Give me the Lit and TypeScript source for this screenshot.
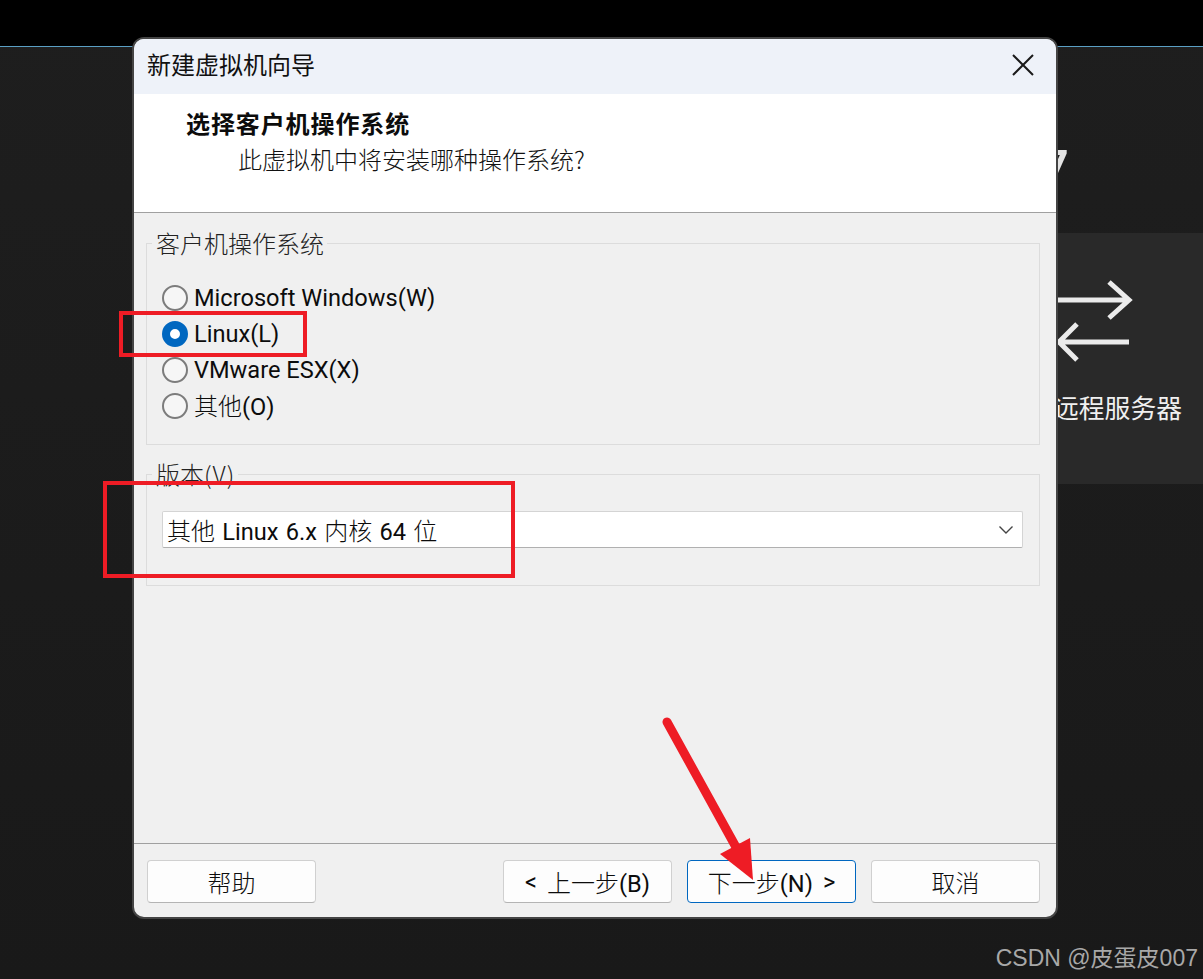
import { LitElement, html, css } from 'lit';
import { customElement } from 'lit/decorators.js';

const options = [
  { label: html`Microsoft Windows(W)`, checked: false },
  { label: html`Linux(L)`, checked: true },
  { label: html`VMware ESX(X)`, checked: false },
  { label: html`<span class="cj">其他</span>(O)`, checked: false },
];

@customElement('app-root')
export class AppRoot extends LitElement {
  static styles = css`
    :host {
      display: block;
      position: relative;
      width: 1203px;
      height: 979px;
      overflow: hidden;
      background: linear-gradient(#1e1e1e, #191919);
      font-family: Roboto, "Noto Sans CJK SC", sans-serif;
      font-size: 23.6px;
      color: #0c0c0c;
    }
    .cj {
      font-family: "Noto Sans CJK SC", sans-serif;
      font-size: 24px;
      font-weight: 300;
    }

    /* desktop behind the dialog */
    .topbar {
      height: 46px;
      background: #000;
      border-bottom: 1px solid #5a9fc4;
    }
    .hero {
      height: 186px;
      display: flex;
      justify-content: flex-end;
    }
    .version {
      margin: 98px 134px 0 0;
      height: 50px;
      font-family: Roboto, sans-serif;
      font-size: 54px;
      font-weight: 500;
      line-height: 50px;
      color: #e4e4e4;
    }
    .server {
      margin-left: 1000px;
      height: 251px;
      padding: 46px 0 0 57px;
      box-sizing: border-box;
      background: #292929;
      color: #f0f0f0;
      font-family: "Noto Sans CJK SC", sans-serif;
    }
    .server svg {
      display: block;
    }
    .server span {
      display: block;
      margin: 21px 0 0 -4px;
      font-size: 25.8px;
      line-height: 34px;
      white-space: nowrap;
    }

    /* dialog window */
    .dialog {
      position: absolute;
      left: 132px;
      top: 37px;
      width: 926px;
      height: 882px;
      box-sizing: border-box;
      display: flex;
      flex-direction: column;
      border: 2px solid #444;
      border-radius: 12px;
      overflow: hidden;
      background: #f0f0f0;
    }
    .titlebar {
      height: 55px;
      flex: none;
      display: flex;
      align-items: center;
      justify-content: space-between;
      padding: 0 22px 6px 13px;
      box-sizing: border-box;
      background: #eef2f9;
      font-family: "Noto Sans CJK SC", sans-serif;
      font-size: 24px;
      color: #111;
    }
    .titlebar svg {
      margin-top: 2px;
    }
    .header {
      height: 119px;
      flex: none;
      box-sizing: border-box;
      padding: 11px 0 0 52px;
      background: #fff;
      border-bottom: 1px solid #a0a0a0;
      font-family: "Noto Sans CJK SC", sans-serif;
      font-size: 24px;
      line-height: 36px;
    }
    .header b {
      display: block;
      font-weight: 700;
      letter-spacing: 0.9px;
    }
    .header p {
      margin: 0 0 0 52px;
      color: #111;
      font-weight: 300;
    }

    .main {
      flex: 1;
      padding: 13px 16px 0 12px;
    }
    fieldset {
      margin: 0;
      padding: 0 16px 0 15px;
      border: 1px solid #dcdcdc;
    }
    legend {
      margin-left: -10px;
      padding: 0 3px 0 4px;
      line-height: 34px;
      color: #222;
      font-weight: 300;
      font-size: 24px;
      font-family: "Noto Sans CJK SC", sans-serif;
    }
    legend span {
      letter-spacing: 1px;
    }
    .os {
      height: 219px;
      box-sizing: border-box;
      padding-top: 20px;
    }
    .ver {
      height: 129px;
      box-sizing: border-box;
      margin-top: 12px;
      padding-top: 20px;
    }

    .radio-row {
      height: 36px;
      display: flex;
      align-items: center;
      gap: 6px;
      line-height: 28px;
      white-space: nowrap;
    }
    .radio {
      width: 26px;
      height: 26px;
      flex: none;
      box-sizing: border-box;
      border: 2px solid #7c7c7c;
      border-radius: 50%;
      background: #f6f6f6;
    }
    .radio.on {
      border: 8px solid #0067c0;
      background: #fff;
    }

    .combo {
      height: 37px;
      box-sizing: border-box;
      display: flex;
      align-items: center;
      justify-content: space-between;
      padding: 0 8px 0 4px;
      background: #fff;
      border: 1px solid #d4d4d4;
      border-bottom-color: #b0b0b0;
      border-radius: 2px;
      word-spacing: 1.4px;
      white-space: nowrap;
    }

    .footer {
      height: 74px;
      flex: none;
      box-sizing: border-box;
      display: flex;
      gap: 15px;
      padding: 16px 16px 0 13px;
      border-top: 1px solid #a0a0a0;
    }
    .btn {
      width: 169px;
      height: 43px;
      box-sizing: border-box;
      display: flex;
      align-items: center;
      justify-content: center;
      gap: 10px;
      background: #fdfdfd;
      border: 1px solid #d0d0d0;
      border-bottom-color: #b4b4b4;
      border-radius: 4px;
      white-space: nowrap;
    }
    .btn.help {
      margin-right: auto;
    }
    .btn.primary {
      border-color: #0067c0;
    }

    /* red annotations on top of the screenshot */
    .mark {
      position: absolute;
      box-sizing: border-box;
      border: 4px solid #ee1c25;
    }
    .mark.linux {
      left: 119px;
      top: 311px;
      width: 188px;
      height: 46px;
    }
    .mark.version-box {
      left: 103px;
      top: 481px;
      width: 412px;
      height: 97px;
    }
    .arrow {
      position: absolute;
      left: 640px;
      top: 700px;
    }
    .watermark {
      position: absolute;
      right: 5px;
      top: 943px;
      color: #a8a8a8;
      font-family: "Liberation Sans", "Noto Sans CJK SC", sans-serif;
      font-size: 23px;
      line-height: 30px;
      white-space: nowrap;
    }
  `;

  render() {
    return html`
      <div class="topbar"></div>
      <div class="hero"><div class="version">7</div></div>
      <div class="server">
        <svg width="80" height="90" viewBox="0 0 80 90" fill="none" stroke="#ebebeb" stroke-width="5">
          <path d="M0 21H72M52 3L72 21L52 39" />
          <path d="M72 63H2M20 45L2 63L20 81" />
        </svg>
        <span>远程服务器</span>
      </div>

      <div class="dialog">
        <div class="titlebar">
          <span>新建虚拟机向导</span>
          <svg width="22" height="22" viewBox="0 0 22 22" fill="none" stroke="#1a1a1a" stroke-width="2">
            <path d="M1 1L21 21M21 1L1 21" />
          </svg>
        </div>
        <div class="header">
          <b>选择客户机操作系统</b>
          <p>此虚拟机中将安装哪种操作系统?</p>
        </div>
        <div class="main">
          <fieldset class="os">
            <legend>客户机操作系统</legend>
            ${options.map(
              (o) => html`
                <div class="radio-row">
                  <span class="radio ${o.checked ? 'on' : ''}"></span>
                  <span>${o.label}</span>
                </div>
              `
            )}
          </fieldset>
          <fieldset class="ver">
            <legend>版本<span>(V)</span></legend>
            <div class="combo">
              <span><span class="cj">其他</span> Linux 6.x <span class="cj">内核</span> 64 <span class="cj">位</span></span>
              <svg width="16" height="10" viewBox="0 0 16 10" fill="none" stroke="#444" stroke-width="1.4">
                <path d="M1.5 1.5L8 8L14.5 1.5" />
              </svg>
            </div>
          </fieldset>
        </div>
        <div class="footer">
          <div class="btn help"><span class="cj">帮助</span></div>
          <div class="btn"><span>&lt;</span><span><span class="cj">上一步</span>(B)</span></div>
          <div class="btn primary"><span><span class="cj">下一步</span>(N)</span><span>&gt;</span></div>
          <div class="btn"><span class="cj">取消</span></div>
        </div>
      </div>

      <div class="mark linux"></div>
      <div class="mark version-box"></div>
      <svg class="arrow" width="130" height="190" viewBox="0 0 130 190">
        <path d="M27 22L102 158" fill="none" stroke="#ee1c25" stroke-width="9" stroke-linecap="round" />
        <path d="M113 180L80 154L110 138Z" fill="#ee1c25" />
      </svg>
      <div class="watermark">CSDN @皮蛋皮007</div>
    `;
  }
}
